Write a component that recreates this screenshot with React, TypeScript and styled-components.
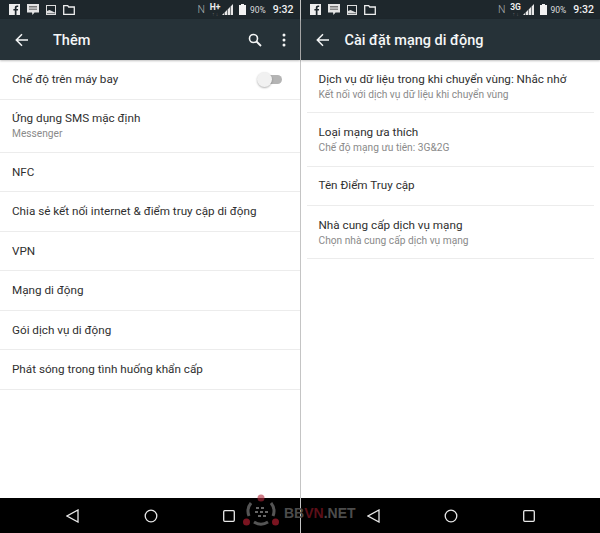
import React from "react";
import styled, { createGlobalStyle } from "styled-components";

interface Item {
  title: string;
  sub?: string;
  toggle?: boolean;
}

const moreItems: Item[] = [
  { title: "Chế độ trên máy bay", toggle: true },
  { title: "Ứng dụng SMS mặc định", sub: "Messenger" },
  { title: "NFC" },
  { title: "Chia sẻ kết nối internet & điểm truy cập di động" },
  { title: "VPN" },
  { title: "Mạng di động" },
  { title: "Gói dịch vụ di động" },
  { title: "Phát sóng trong tình huống khẩn cấp" },
];

const networkItems: Item[] = [
  { title: "Dịch vụ dữ liệu trong khi chuyển vùng: Nhắc nhở", sub: "Kết nối với dịch vụ dữ liệu khi chuyển vùng" },
  { title: "Loại mạng ưa thích", sub: "Chế độ mạng ưu tiên: 3G&2G" },
  { title: "Tên Điểm Truy cập" },
  { title: "Nhà cung cấp dịch vụ mạng", sub: "Chọn nhà cung cấp dịch vụ mạng" },
];

const StatusIcons = () => (
  <IconGroup>
    <svg width="11" height="11" viewBox="0 0 11 11">
      <rect width="11" height="11" fill="#eee" />
      <path d="M7.5 11V6.600h1.400l.2-1.700H7.500V3.900c0-.5.2-.8.8-.8h.9V1.600H8c-1.300 0-2.200.8-2.200 2.200v1.100H4.400v1.700h1.400V11z" fill="#1e272c" />
    </svg>
    <svg width="12" height="12" viewBox="0 0 12 12">
      <path d="M0 0h12v8.500H7.500L5.500 11 5 8.500H0z" fill="#e4e4e4" />
      <rect x="2" y="2" width="8" height="1.500" fill="#777" />
      <rect x="2" y="4.500" width="8" height="1.500" fill="#888" />
    </svg>
    <svg width="10" height="10" viewBox="0 0 10 10">
      <rect x=".5" y=".5" width="9" height="9" fill="none" stroke="#ddd" />
      <path d="M1 8.500V6l2.500-1L9 7.500v1z" fill="#ddd" />
    </svg>
    <svg width="12" height="10" viewBox="0 0 12 10">
      <path d="M.7 9.300V.7h4l1 1.300h5.600v7.300z" fill="none" stroke="#eee" strokeWidth="1.300" />
    </svg>
  </IconGroup>
);

const Network = ({ label }: { label: string }) => (
  <StatusRight>
    <NfcMark>N</NfcMark>
    <DataMark>
      <DataLabel>{label}</DataLabel>
      <DataDots>↑ ↓</DataDots>
    </DataMark>
    <SignalIcon width="11" height="11" viewBox="0 0 11 11">
      <path d="M0 11 2 9v2zM2.600 11V8.400L5 6v5zM5.600 11V5.400L8 3v8zM8.600 11V2.400L11 0v11z" fill="#e8e8e8" />
    </SignalIcon>
    <svg width="7" height="11" viewBox="0 0 7 11">
      <path d="M2 0h3v1h2v10H0V1h2z" fill="#f2f2f2" />
    </svg>
    <Percent>90%</Percent>
    <Clock>9:32</Clock>
  </StatusRight>
);

const Phone = ({ title, titleGap, data, items, actions, inset }: {
  title: string;
  titleGap: number;
  data: string;
  items: Item[];
  actions?: boolean;
  inset?: boolean;
}) => (
  <Panel>
    <StatusBar>
      <StatusIcons />
      <Network label={data} />
    </StatusBar>
    <Toolbar>
      <BackIcon width="14" height="14" viewBox="0 0 14 14">
        <path d="M13 7H1.500M7 1.300 1.300 7 7 12.700" fill="none" stroke="#f4f6f6" strokeWidth="1.500" />
      </BackIcon>
      <Title $gap={titleGap}>{title}</Title>
      {actions && (
        <Actions>
          <svg width="14" height="14" viewBox="0 0 14 14">
            <circle cx="5.500" cy="5.500" r="4" fill="none" stroke="#f4f6f6" strokeWidth="1.600" />
            <path d="M8.500 8.500 13 13" stroke="#f4f6f6" strokeWidth="1.800" />
          </svg>
          <svg width="4" height="14" viewBox="0 0 4 14">
            <circle cx="2" cy="2" r="1.500" fill="#f4f6f6" />
            <circle cx="2" cy="7" r="1.500" fill="#f4f6f6" />
            <circle cx="2" cy="12" r="1.500" fill="#f4f6f6" />
          </svg>
        </Actions>
      )}
    </Toolbar>
    <List $inset={inset}>
      {items.map((item) => (
        <Row key={item.title} $tall={!!item.sub}>
          <RowText>
            <RowTitle>{item.title}</RowTitle>
            {item.sub && <RowSub>{item.sub}</RowSub>}
          </RowText>
          {item.toggle && (
            <Toggle>
              <Knob />
            </Toggle>
          )}
        </Row>
      ))}
    </List>
    <NavBar>
      <svg width="13" height="14" viewBox="0 0 13 14">
        <path d="M12 1v12L1 7z" fill="none" stroke="#e8e8e8" strokeWidth="1.300" />
      </svg>
      <svg width="14" height="14" viewBox="0 0 14 14">
        <circle cx="7" cy="7" r="5.800" fill="none" stroke="#e8e8e8" strokeWidth="1.300" />
      </svg>
      <svg width="12" height="12" viewBox="0 0 12 12">
        <rect x=".7" y=".7" width="10.600" height="10.600" rx="1" fill="none" stroke="#e8e8e8" strokeWidth="1.300" />
      </svg>
    </NavBar>
  </Panel>
);

export default function App() {
  return (
    <>
      <GlobalStyle />
      <Screen>
        <Phone title="Thêm" titleGap={24} data="H+" items={moreItems} actions />
        <Phone title="Cài đặt mạng di động" titleGap={15} data="3G" items={networkItems} inset />
        <Watermark>
          <svg width="36" height="34" viewBox="0 0 36 34">
            <path d="M8 9A13 13 0 0 0 6 22M28 9A13 13 0 0 1 30 22M11 28A13 13 0 0 0 25 28" fill="none" stroke="#555" strokeWidth="3" />
            <circle cx="18" cy="4" r="3.500" fill="#b0283a" fillOpacity="0.6" />
            <circle cx="3.500" cy="28" r="3.500" fill="#7a1420" />
            <circle cx="32.500" cy="28" r="3.500" fill="#7a1420" />
            <path d="M13 13h3v2h-3zM18 13h3v2h-3zM12 17h3v2h-3zM17 17h3v2h-3zM22 17h3v2h-3zM15 21h3v2h-3zM20 21h3v2h-3z" fill="#666" />
          </svg>
          <MarkText>
            BB<MarkAccent>VN</MarkAccent>.NET
          </MarkText>
        </Watermark>
      </Screen>
    </>
  );
}

const GlobalStyle = createGlobalStyle`
  html, body {
    margin: 0;
    padding: 0;
    background: #fff;
  }
  * {
    box-sizing: border-box;
  }
`;

const Screen = styled.div`
  position: relative;
  display: flex;
  gap: 1px;
  width: 600px;
  height: 533px;
  background: #c4c4c4;
  font-family: Roboto, "Noto Sans", sans-serif;
  overflow: hidden;
`;

const Panel = styled.div`
  flex: 1;
  display: flex;
  flex-direction: column;
  min-width: 0;
  background: #fff;
`;

const StatusBar = styled.div`
  display: flex;
  align-items: center;
  justify-content: space-between;
  height: 19px;
  padding: 0 6px 0 9px;
  background: #1e272c;
`;

const IconGroup = styled.div`
  display: flex;
  align-items: center;
  gap: 7px;
`;

const StatusRight = styled.div`
  display: flex;
  align-items: center;
  color: #e8e8e8;
`;

const NfcMark = styled.span`
  margin-right: 3px;
  font-size: 10.500px;
  font-weight: 300;
  color: #a8adaf;
`;

const DataMark = styled.div`
  display: flex;
  flex-direction: column;
  align-items: center;
  width: 14px;
  height: 15px;
  padding-top: 1px;
`;

const DataLabel = styled.span`
  font-size: 8.500px;
  line-height: 9px;
  font-weight: 700;
  color: #eee;
`;

const DataDots = styled.span`
  font-size: 5px;
  line-height: 5px;
  color: #666;
`;

const SignalIcon = styled.svg`
  margin-right: 6px;
`;

const Percent = styled.span`
  margin-left: 4px;
  font-size: 8.500px;
  color: #ddd;
`;

const Clock = styled.span`
  margin-left: 7px;
  font-size: 10.500px;
  font-weight: 500;
  color: #f0f0f0;
`;

const Toolbar = styled.div`
  display: flex;
  align-items: center;
  height: 41px;
  padding: 0 14px 0 15px;
  background: #263238;
  box-shadow: 0 1px 2px rgba(0, 0, 0, 0.25);
`;

const BackIcon = styled.svg`
  flex-shrink: 0;
`;

const Title = styled.div<{ $gap: number }>`
  margin-left: ${(p) => p.$gap}px;
  padding-top: 1px;
  font-size: 14.500px;
  font-weight: 500;
  color: #f5f7f7;
`;

const Actions = styled.div`
  display: flex;
  align-items: center;
  gap: 20px;
  margin-left: auto;
`;

const List = styled.div<{ $inset?: boolean }>`
  flex: 1;
  padding: 0 ${(p) => (p.$inset ? 6 : 0)}px;
`;

const Row = styled.div<{ $tall: boolean }>`
  display: flex;
  align-items: center;
  justify-content: space-between;
  height: ${(p) => (p.$tall ? 53.300 : 39.500)}px;
  padding: 0 12px;
  border-bottom: 1px solid #ececec;
`;

const RowText = styled.div`
  display: flex;
  flex-direction: column;
  gap: 1px;
`;

const RowTitle = styled.div`
  font-size: 11.700px;
  line-height: 15px;
  color: #2f2f2f;
`;

const RowSub = styled.div`
  font-size: 10.200px;
  line-height: 13px;
  color: #8a8a8a;
`;

const Toggle = styled.div`
  position: relative;
  width: 24px;
  height: 9px;
  margin-right: 6px;
  border-radius: 5px;
  background: #b4b4b4;
`;

const Knob = styled.div`
  position: absolute;
  left: -1px;
  top: -3px;
  width: 15px;
  height: 15px;
  border-radius: 50%;
  background: #f1f1f1;
  box-shadow: 0 1px 2px rgba(0, 0, 0, 0.3);
`;

const NavBar = styled.div`
  display: flex;
  align-items: center;
  justify-content: space-between;
  height: 35px;
  padding: 0 65px 0 66px;
  background: #000;
`;

const Watermark = styled.div`
  position: absolute;
  left: 243px;
  top: 494px;
  display: flex;
  align-items: flex-end;
  gap: 5px;
`;

const MarkText = styled.span`
  margin-bottom: 7px;
  font-family: "Liberation Sans", sans-serif;
  font-size: 14px;
  font-weight: 700;
  color: #4c4c4c;
`;

const MarkAccent = styled.span`
  color: #5c0f18;
`;
